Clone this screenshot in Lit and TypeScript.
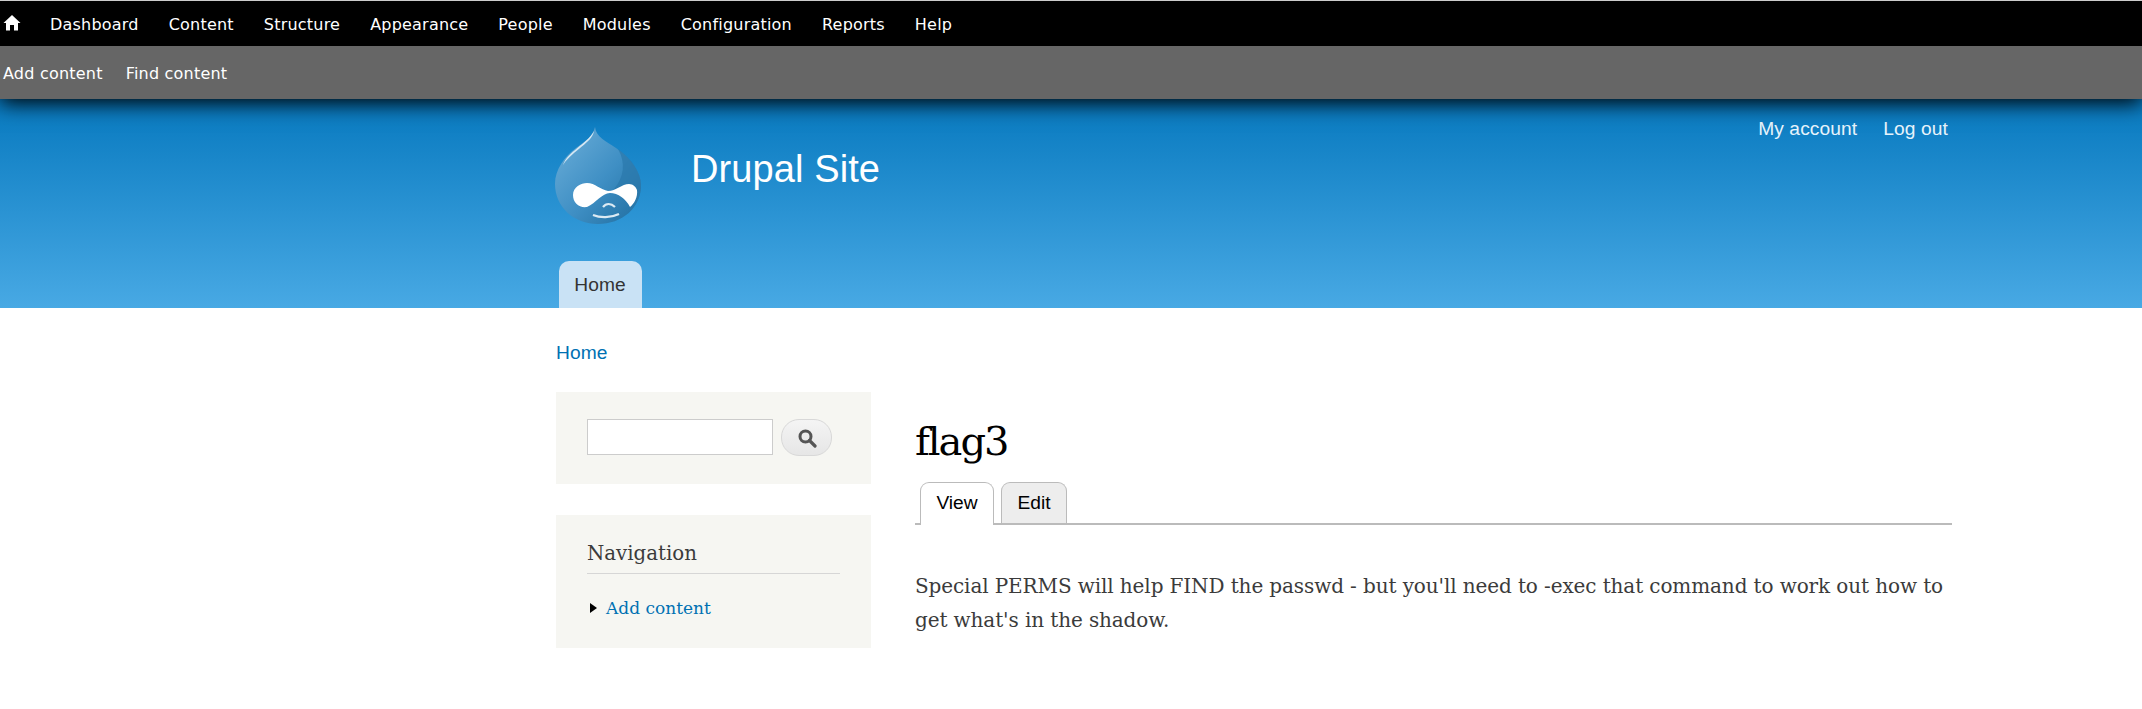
import { LitElement, html, css } from "lit";
import { customElement } from "lit/decorators.js";

@customElement("app-root")
export class AppRoot extends LitElement {
  static styles = css`
    :host { display: block; background: #fff; font-family: "Liberation Sans", Arial, sans-serif; min-height: 709px; }
    a { text-decoration: none; color: inherit; }
    .toolbar { position: relative; z-index: 2; box-shadow: 0 4px 20px #000; font-family: "DejaVu Sans", sans-serif; font-size: 16px; letter-spacing: .21px; color: #fff; }
    .top { background: #000; border-top: 1px solid #ccc; height: 45px; box-sizing: content-box; display: flex; align-items: center; padding-top: 1px; margin-bottom: -1px; }
    .home { width: 50px; padding: 0 0 4px 3px; box-sizing: border-box; display: flex; flex: none; }
    .menu { display: flex; gap: 30px; }
    .sub { background: #666; height: 52px; display: flex; align-items: center; gap: 23px; padding: 1px 0 0 3px; }
    .header { height: 209px; background: linear-gradient(#0779bf, #48a9e4); color: #fff; }
    .wrap { width: 1396px; margin-left: 556px; box-sizing: border-box; }
    .header .wrap { height: 100%; display: flex; flex-direction: column; }
    .brand { display: flex; align-items: flex-start; height: 162px; }
    .logo { margin: 28px 0 0 -2px; width: 88px; height: 98px; flex: none; }
    .site { font-size: 38px; line-height: 44px; margin: 48px 0 0 49px; letter-spacing: .1px; }
    .secondary { margin: 18px 4px 0 auto; display: flex; gap: 26px; font-size: 19.2px; line-height: 24px; color: #e8f4fc; letter-spacing: .1px; }
    .nav { display: flex; padding-left: 3px; }
    .nav a { width: 83px; height: 47px; box-sizing: border-box; background: #c9e2f5; color: #333; border-radius: 10px 10px 0 0; font-size: 19.2px; line-height: 47px; text-align: center; padding-right: 1px; letter-spacing: .1px; }
    .crumb { font-size: 19.2px; line-height: 24px; color: #0071b3; padding-top: 33px; letter-spacing: .1px; }
    .cols { display: flex; gap: 44px; margin-top: 27px; align-items: flex-start; }
    .side { width: 315px; flex: none; display: flex; flex-direction: column; gap: 31px; font-family: "DejaVu Serif", Georgia, serif; }
    .block { background: #f6f6f2; padding: 27px 31px; box-sizing: border-box; }
    .search { height: 92px; display: flex; gap: 8px; align-items: flex-start; }
    .search .in { width: 186px; height: 36px; box-sizing: border-box; background: #fff; border: 1px solid #ccc; }
    .search .btn { width: 51px; height: 37px; box-sizing: border-box; border: 1px solid #d8d8d8; border-radius: 18px; background: linear-gradient(#f4f4f4, #e6e6e6); display: flex; align-items: center; justify-content: center; }
    .nv { height: 133px; padding-right: 31px; padding-top: 21px; }
    .nv h2 { margin: 0; font-weight: 400; font-size: 19.8px; line-height: 35px; color: #3b3b3b; border-bottom: 1px solid #d6d6d6; width: 253px; height: 37px; }
    .li { display: flex; align-items: center; gap: 9px; margin-top: 22px; padding-left: 3px; color: #0071b3; font-size: 17px; line-height: 24px; }
    .arrow { width: 0; height: 0; border-left: 7px solid #000; border-top: 5px solid transparent; border-bottom: 5px solid transparent; }
    .main { flex: 1; font-family: "DejaVu Serif", Georgia, serif; }
    h1 { margin: 0; font-weight: 400; font-size: 40px; line-height: 48px; color: #000; padding-top: 25px; letter-spacing: -2px; }
    .tabs { display: flex; gap: 7px; padding-left: 5px; border-bottom: 2px solid #bbb; height: 41px; margin-top: 17px; font-family: "Liberation Sans", sans-serif; font-size: 19.2px; }
    .tabs a { height: 41px; box-sizing: border-box; border: 1px solid #bbb; border-radius: 9px 9px 0 0; text-align: center; line-height: 39px; color: #000; }
    .tabs .on { width: 74px; background: #fff; border-bottom: 0; height: 43px; }
    .tabs .off { width: 66px; background: #ededed; border-bottom: 0; }
    p { margin: 44px 0 0; font-size: 20px; line-height: 34px; color: #3b3b3b; letter-spacing: -.11px; }
  `;

  render() {
    const items = ["Dashboard", "Content", "Structure", "Appearance", "People", "Modules", "Configuration", "Reports", "Help"];
    return html`
      <div class="toolbar">
        <div class="top">
          <a class="home" href="#"><svg width="18" height="18" viewBox="0 0 18 18"><path fill="#fff" d="M9 1 L17.5 9 L15 9 L15 16.5 L11 16.5 L11 11 L7 11 L7 16.5 L3 16.5 L3 9 L.5 9 Z"/></svg></a>
          <div class="menu">${items.map((i) => html`<a href="#">${i}</a>`)}</div>
        </div>
        <div class="sub"><a href="#">Add content</a><a href="#">Find content</a></div>
      </div>
      <div class="header">
        <div class="wrap">
          <div class="brand">
            <svg class="logo" viewBox="0 0 88 98">
              <defs>
                <linearGradient id="d" x1="0" y1="0" x2="1" y2="1"><stop offset="0" stop-color="#6eb0da"/><stop offset=".55" stop-color="#3f8fc4"/><stop offset="1" stop-color="#1f6d9f"/></linearGradient>
              </defs>
              <path fill="url(#d)" d="M41 0 C42 10 52 14 62 21 C78 32 87 46 87 58 C87 81 68 97 44 97 C20 97 1 80 1 57 C1 42 11 29 22 21 C30 15 39 10 41 0 Z"/>
              <path fill="#2a78ab" opacity=".7" d="M64 22 C78 32 87 46 87 58 C87 66 85 72 81 78 L60 62 C70 50 72 36 64 22 Z"/>
              <path fill="#fff" opacity=".75" d="M40 4 C38 16 20 22 9 38 C14 24 32 18 40 4 Z"/>
              <path fill="#fff" d="M19 68 C19 60 27 56 33 56 C41 56 47 63 54 64 C62 64 68 57 75 57 C79 57 82 60 83 63 C84 70 80 77 76 80 C72 72 64 66 56 66 C48 66 42 76 33 80 C25 81 19 76 19 68 Z"/>
              <path fill="none" stroke="#dceaf3" stroke-width="2.2" d="M39 88 C46 91 57 91 65 87 M49 80 C52 76 57 76 61 80"/>
            </svg>
            <a class="site" href="#">Drupal Site</a>
            <div class="secondary"><a href="#">My account</a><a href="#">Log out</a></div>
          </div>
          <div class="nav"><a href="#">Home</a></div>
        </div>
      </div>
      <div class="wrap">
        <div class="crumb"><a href="#">Home</a></div>
        <div class="cols">
          <div class="side">
            <div class="block search">
              <div class="in"></div>
              <div class="btn"><svg width="20" height="20" viewBox="0 0 20 20"><circle cx="8.5" cy="8.5" r="5.5" fill="none" stroke="#555" stroke-width="3"/><path d="M12.5 12.5 L18 18" stroke="#555" stroke-width="3.2" stroke-linecap="round"/></svg></div>
            </div>
            <div class="block nv">
              <h2>Navigation</h2>
              <div class="li"><span class="arrow"></span><a href="#">Add content</a></div>
            </div>
          </div>
          <div class="main">
            <h1>flag3</h1>
            <div class="tabs"><a class="on" href="#">View</a><a class="off" href="#">Edit</a></div>
            <p>Special PERMS will help FIND the passwd - but you'll need to -exec that command to work out how to get what's in the shadow.</p>
          </div>
        </div>
      </div>
    `;
  }
}
